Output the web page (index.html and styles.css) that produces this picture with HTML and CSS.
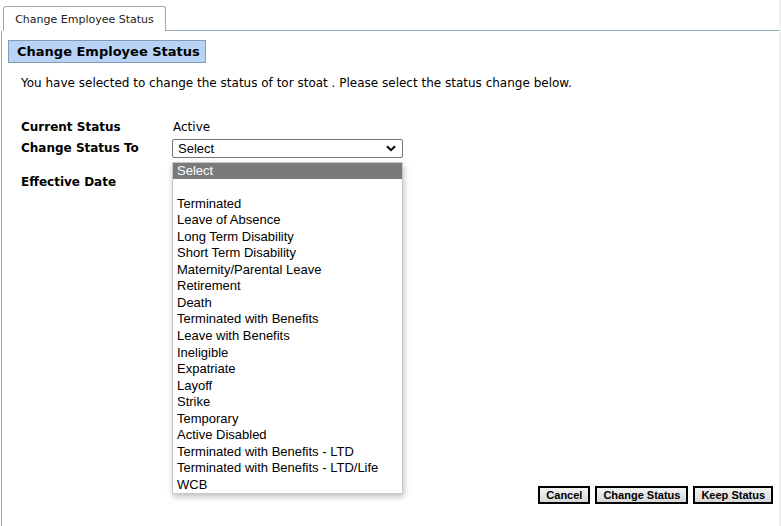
FILE: index.html
```html
<!DOCTYPE html>
<html>
<head>
<meta charset="utf-8">
<link rel="stylesheet" href="styles.css">
</head>
<body>
<div class="page">
  <div class="tabs">
    <div class="tab">Change Employee Status</div>
    <div class="tab-rest"></div>
  </div>
  <div class="panel">
    <div class="heading">Change Employee Status</div>
    <p class="intro">You have selected to change the status of tor stoat . Please select the status change below.</p>
    <div class="form">
      <div class="row r1">
        <div class="label">Current Status</div>
        <div class="value">Active</div>
      </div>
      <div class="row r2">
        <div class="label">Change Status To</div>
        <div class="value">
          <div class="select-wrap">
            <div class="select">
              <span>Select</span>
              <svg class="chev" width="10" height="7" viewBox="0 0 10 7"><path d="M1 1.2 L5 5.2 L9 1.2" fill="none" stroke="#000" stroke-width="2"/></svg>
            </div>
            <div class="dropdown">
              <div class="opt sel">Select</div>
              <div class="opt">&nbsp;</div>
              <div class="opt">Terminated</div>
              <div class="opt">Leave of Absence</div>
              <div class="opt">Long Term Disability</div>
              <div class="opt">Short Term Disability</div>
              <div class="opt">Maternity/Parental Leave</div>
              <div class="opt">Retirement</div>
              <div class="opt">Death</div>
              <div class="opt">Terminated with Benefits</div>
              <div class="opt">Leave with Benefits</div>
              <div class="opt">Ineligible</div>
              <div class="opt">Expatriate</div>
              <div class="opt">Layoff</div>
              <div class="opt">Strike</div>
              <div class="opt">Temporary</div>
              <div class="opt">Active Disabled</div>
              <div class="opt">Terminated with Benefits - LTD</div>
              <div class="opt">Terminated with Benefits - LTD/Life</div>
              <div class="opt">WCB</div>
            </div>
          </div>
        </div>
      </div>
      <div class="row r3">
        <div class="label">Effective Date</div>
        <div class="value"></div>
      </div>
    </div>
    <div class="buttons">
      <button class="btn">Cancel</button>
      <button class="btn">Change Status</button>
      <button class="btn">Keep Status</button>
    </div>
  </div>
</div>
</body>
</html>
```
FILE: styles.css
```css
html, body {
  margin: 0;
  padding: 0;
  background: #fff;
}
body {
  font-family: "DejaVu Sans", Verdana, sans-serif;
  font-size: 12px;
  color: #000;
  width: 781px;
  height: 526px;
  overflow: hidden;
}
.page {
  display: flex;
  flex-direction: column;
  height: 526px;
  border-right: 2px solid #f0f0f0;
  box-sizing: border-box;
}
.tabs {
  display: flex;
  align-items: flex-end;
  padding-top: 5px;
  height: 31px;
  box-sizing: border-box;
}
.tabs::before {
  content: "";
  width: 3px;
  height: 26px;
  border-bottom: 1px solid transparent;
  flex: none;
}
.tab {
  width: 163px;
  height: 25px;
  box-sizing: border-box;
  border: 1px solid #a6a6a6;
  border-bottom: none;
  border-radius: 3px 3px 0 0;
  font-size: 11px;
  color: #222;
  display: flex;
  align-items: center;
  justify-content: center;
  padding-top: 1px;
  background: #fff;
  flex: none;
}
.tab-rest {
  flex: 1;
  border-bottom: 1px solid #8fa8b5;
}
.panel {
  flex: 1;
  border-left: 1px solid #8fa8b5;
  margin-left: 1px;
  position: relative;
  display: flex;
  flex-direction: column;
}
.heading {
  align-self: flex-start;
  margin: 9px 0 0 6px;
  width: 198px;
  height: 23px;
  box-sizing: border-box;
  background: #b8d3f6;
  border: 1px solid #7f9db9;
  font-weight: bold;
  font-size: 13px;
  padding: 3px 0 0 8px;
  color: #000;
}
.intro {
  margin: 12px 0 0 19px;
  font-size: 12px;
  line-height: 16px;
  color: #000;
}
.form {
  margin: 27px 0 0 19px;
  display: flex;
  flex-direction: column;
}
.row {
  display: flex;
  align-items: center;
}
.label {
  width: 152px;
  font-weight: bold;
  font-size: 12px;
}
.r1 { height: 18px; }
.r2 { height: 20px; margin-top: 2px; }
.r3 { height: 18px; margin-top: 15px; }
.value { font-size: 12px; }
.select-wrap {
  position: relative;
  margin-left: -1px;
}
.select {
  width: 231px;
  height: 19px;
  box-sizing: border-box;
  border: 1px solid #767676;
  border-radius: 2px;
  font-family: "Liberation Sans", Arial, sans-serif;
  font-size: 13px;
  display: flex;
  align-items: center;
  justify-content: space-between;
  padding: 0 6px 0 5px;
}
.chev { display: block; }
.dropdown {
  position: absolute;
  left: 0;
  top: 23px;
  width: 231px;
  box-sizing: border-box;
  background: #fff;
  border: 1px solid #c8c8c8;
  box-shadow: 1px 3px 6px rgba(0,0,0,0.25);
  font-family: "Liberation Sans", Arial, sans-serif;
  font-size: 13px;
  z-index: 5;
}
.opt {
  height: 16.55px;
  line-height: 16px;
  padding-left: 4px;
  white-space: nowrap;
}
.opt.sel {
  background: #7a7a7a;
  color: #fff;
}
.buttons {
  margin-top: auto;
  margin-bottom: 22px;
  display: flex;
  justify-content: flex-end;
  gap: 5px;
  padding-right: 6px;
}
.btn {
  font-family: "Liberation Sans", Arial, sans-serif;
  font-weight: bold;
  font-size: 11px;
  height: 18px;
  border: 2px solid #000;
  background: linear-gradient(#f4f4f4, #d8d8d8);
  padding: 0 6px;
  margin: 0;
  color: #000;
  line-height: 14px;
}
```
